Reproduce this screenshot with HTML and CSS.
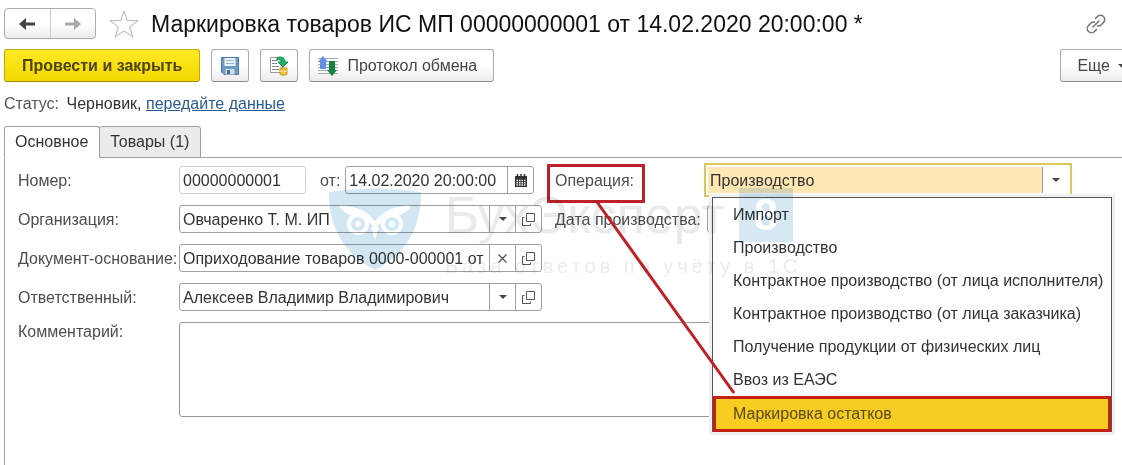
FILE: index.html
```
<!DOCTYPE html>
<html lang="ru">
<head>
	<meta charset="UTF-8">
	<title>Маркировка товаров ИС МП</title>
	<link rel="stylesheet" href="styles.css">
</head>
<body>
	<header class="header">
		<nav class="history">
			<button type="button" aria-label="Назад"><svg width="18" height="14" viewBox="0 0 18 14"><path d="M1 7l7-6v12z" fill="#444"/><path d="M6 7h11" stroke="#444" stroke-width="3"/></svg></button>
			<button type="button" aria-label="Вперед"><svg width="18" height="14" viewBox="0 0 18 14"><path d="M17 7l-7-6v12z" fill="#aaa"/><path d="M12 7H1" stroke="#aaa" stroke-width="3"/></svg></button>
		</nav>
		<button type="button" class="plain" aria-label="В избранное"><svg width="30" height="28" viewBox="0 0 30 28"><path d="M15 1l3.300 9.700H29l-8.500 6.300 3.300 10L15 20.800 6.200 27l3.300-10L1 10.700h10.700z" fill="#fff" stroke="#b4b4b4"/></svg></button>
		<h1>Маркировка товаров ИС МП 00000000001 от 14.02.2020 20:00:00 *</h1>
		<button type="button" class="plain link" aria-label="Получить ссылку"><svg width="20" height="20" viewBox="0 0 20 20" fill="none" stroke="#777" stroke-width="1.600" stroke-linecap="round"><path d="M9.500 4.500l2-2a3.800 3.800 0 0 1 6 6L15 11c-1 1-2.500 1.200-3.500.8M10.500 15.500l-2 2a3.800 3.800 0 0 1-6-6L5 9c1-1 2.500-1.200 3.500-.8M7 13l6-6"/></svg></button>
	</header>

	<div class="toolbar">
		<button type="button" class="btn primary">Провести и закрыть</button>
		<button type="button" class="btn icon" aria-label="Записать"><svg width="18" height="18" viewBox="0 0 18 18"><path d="M.5.5h17v17H3l-2.500-2.500z" fill="#6d9bc8" stroke="#4b76a3"/><path d="M3.500 1h11v8h-11z" fill="#edf3f8"/><path d="M5 3.500h8M5 6.500h8" stroke="#9bb2c7"/><path d="M4.500 12h9v5.500h-9z" fill="#d5dde4"/><path d="M6 13h3v4H6z" fill="#426b96"/></svg></button>
		<button type="button" class="btn icon" aria-label="Провести"><svg width="20" height="20" viewBox="0 0 20 20"><path d="M1.500 1.500h12v15h-12z" fill="#fff" stroke="#999"/><path d="M3 4.500h6M3 7.500h5M3 10.500h7M3 13.500h7" stroke="#888"/><path d="M11 12h7v6c0 1.500-7 1.500-7 0z" fill="#eac23c" stroke="#c09525"/><path d="M11 15c2 1 5 1 7 0" fill="none" stroke="#fff0a8"/><path d="M8 1.500c6-1.500 8 1 8 4.500h3l-5 5-5-5h3c0-2-1-3-4-2z" fill="#20b368" stroke="#109050"/></svg></button>
		<button type="button" class="btn"><svg width="22" height="20" viewBox="0 0 22 20"><path d="M1 2.500h20M1 5.500h20M1 8.500h20M1 11.500h20M1 14.500h20M1 17.500h20" stroke="#a5adb5"/><path d="M6 0l5 6H9v7H3V6H1z" fill="#638fe0"/><path d="M15 20l-5-6h2V5h6v9h2z" fill="#158445"/></svg>Протокол обмена</button>
		<button type="button" class="btn more">Еще <span class="caret"></span></button>
	</div>

	<p class="status"><span>Статус:</span> Черновик, <a href="#send">передайте данные</a></p>

	<div class="tabs" role="tablist">
		<button type="button" role="tab" aria-selected="true" class="active">Основное</button>
		<button type="button" role="tab" aria-selected="false">Товары (1)</button>
	</div>

	<main class="panel">
		<form class="form">
			<label for="number">Номер:</label>
			<div class="pair">
				<input class="number" id="number" value="00000000001" readonly>
				<label for="date">от:</label>
				<div class="field date">
					<input id="date" value="14.02.2020 20:00:00">
					<button type="button" aria-label="Календарь"><svg width="12" height="13" viewBox="0 0 12 13"><path d="M0 2h12v11H0z" fill="#333"/><path d="M2.500 0v3M6 0v3M9.500 0v3" stroke="#333" stroke-width="1.500"/><path d="M1.500 6.500h9M1.500 8.800h9M1.500 11h9" stroke="#fff" stroke-width="1.400" stroke-dasharray="1.500 1"/></svg></button>
				</div>
			</div>
			<label class="second marked" for="operation">Операция:
				<svg class="pointer" width="142" height="196" viewBox="0 0 142 196"><path d="M2 2l137 191" stroke="#c01f26" stroke-width="3"/></svg>
			</label>
			<div class="operation">
				<div class="combo">
					<select id="operation">
						<option>Производство</option>
					</select>
					<span class="drop"><span class="caret"></span></span>
				</div>
				<ul class="menu">
					<li><button type="button">Импорт</button></li>
					<li><button type="button">Производство</button></li>
					<li><button type="button">Контрактное производство (от лица исполнителя)</button></li>
					<li><button type="button">Контрактное производство (от лица заказчика)</button></li>
					<li><button type="button">Получение продукции от физических лиц</button></li>
					<li><button type="button">Ввоз из ЕАЭС</button></li>
					<li><button type="button" class="selected">Маркировка остатков</button></li>
				</ul>
			</div>

			<label for="org">Организация:</label>
			<div class="field">
				<input id="org" value="Овчаренко Т. М. ИП">
				<button type="button" aria-label="Выбрать"><span class="caret"></span></button>
				<button type="button" aria-label="Открыть"><svg width="13" height="13" viewBox="0 0 13 13"><path d="M4.500.5h8v8h-8zM2.500 4.500h-2v8h8v-2" fill="none" stroke="#555"/></svg></button>
			</div>
			<label class="second" for="made">Дата производства:</label>
			<div class="field made"><input id="made"></div>

			<label for="base">Документ-основание:</label>
			<div class="field">
				<input id="base" value="Оприходование товаров 0000-000001 от">
				<button type="button" aria-label="Очистить"><svg width="9" height="9" viewBox="0 0 9 9"><path d="M.5.5l8 8M8.500.5l-8 8" stroke="#555" stroke-width="1.300"/></svg></button>
				<button type="button" aria-label="Открыть"><svg width="13" height="13" viewBox="0 0 13 13"><path d="M4.500.5h8v8h-8zM2.500 4.500h-2v8h8v-2" fill="none" stroke="#555"/></svg></button>
			</div>

			<label class="first" for="person">Ответственный:</label>
			<div class="field">
				<input id="person" value="Алексеев Владимир Владимирович">
				<button type="button" aria-label="Выбрать"><span class="caret"></span></button>
				<button type="button" aria-label="Открыть"><svg width="13" height="13" viewBox="0 0 13 13"><path d="M4.500.5h8v8h-8zM2.500 4.500h-2v8h8v-2" fill="none" stroke="#555"/></svg></button>
			</div>

			<label class="first top" for="comment">Комментарий:</label>
			<textarea id="comment"></textarea>
		</form>
	</main>

	<div class="watermark">
		<svg width="92" height="82" viewBox="0 0 92 82">
			<path d="M0 4Q46-3 92 4C92 42 76 66 46 82 16 66 0 42 0 4z" fill="#d3e6f3"/>
			<path d="M10 17c16 1 27 5 36 16 9-11 20-15 36-16-2 5-6 8-11 10-10 1-18 5-25 14-7-9-15-13-25-14-5-2-9-5-11-10z" fill="#fff"/>
			<g fill="none" stroke="#fff" stroke-width="4"><circle cx="29" cy="36" r="9"/><circle cx="63" cy="36" r="9"/></g>
			<g fill="#fff"><circle cx="29" cy="36" r="3"/><circle cx="63" cy="36" r="3"/><path d="M42 39h8l-4 13z"/></g>
		</svg>
		<div class="brand">
			<div class="name">БухЭксперт <span class="eight">8</span></div>
			<div class="tagline">База ответов по учёту в 1С</div>
		</div>
	</div>
</body>
</html>
```
FILE: styles.css
```
*{
	box-sizing: border-box;
}
body{
	position: relative;
	min-height: 100vh;
	margin: 0;
	padding: 8px 0 0 4px;
	display: flex;
	flex-direction: column;
	overflow: hidden;
	background: #fff;
	color: #333;
	font: 16px/20px "Liberation Sans", Arial, sans-serif;
}
button, input, select, textarea{
	margin: 0;
	padding: 0;
	font: inherit;
	color: inherit;
	border: 0;
	background: none;
	outline: none;
}
button{
	display: flex;
	align-items: center;
	justify-content: center;
}
svg{
	display: block;
	flex: none;
}
a{
	color: #2a5c94;
}

/* title row */
.header{
	display: flex;
	align-items: center;
	height: 31px;
}
.history{
	display: flex;
	width: 92px;
	height: 31px;
	margin-right: 13px;
	border: 1px solid #aaa;
	border-radius: 4px;
	background: linear-gradient(#fff 50%, #ececec);
}
.history button{
	flex: 1;
}
.history button + button{
	border-left: 1px solid #ccc;
}
h1{
	margin: 0 0 0 12px;
	font-size: 23px;
	line-height: 30px;
	font-weight: normal;
	color: #111;
	white-space: nowrap;
}
.link{
	margin: 0 16px 0 auto;
}

.toolbar{
	display: flex;
	gap: 11px;
	margin-top: 10px;
}
.btn{
	gap: 8px;
	height: 33px;
	padding: 0 16px 0 7px;
	border: 1px solid #aaa;
	border-bottom-color: #8f8f8f;
	border-radius: 3px;
	background: linear-gradient(#fff 50%, #ececec);
	color: #444;
	white-space: nowrap;
}
.primary{
	padding: 0 17px;
	border-color: #bfa800 #bfa800 #9c8900;
	background: linear-gradient(#ffe924, #f2d800);
	color: #4d4410;
	font-weight: bold;
}
.icon{
	width: 38px;
	padding: 0;
}
.more{
	margin: 0 -21px 0 auto;
	padding: 0 16px;
}
.caret{
	border: 4px solid transparent;
	border-top-color: #444;
	border-bottom: 0;
}

.status{
	margin: 12px 0;
}
.status span{
	margin-right: 3px;
	color: #555;
}

.tabs{
	position: relative;
	display: flex;
	margin-bottom: -1px;
}
.tabs button{
	height: 32px;
	margin-right: -1px;
	padding: 0 11px 0 10px;
	border: 1px solid #a0a0a0;
	border-radius: 3px 3px 0 0;
	background: #ebebeb;
}
.tabs .active{
	border-bottom-color: #fff;
	background: #fff;
}
.panel{
	flex: 1;
	padding: 8px 50px 12px 13px;
	border: 1px solid #a0a0a0;
	border-width: 1px 0 0 1px;
}

.form{
	display: grid;
	grid-template-columns: 161px 363px 136px minmax(200px, 1fr);
	row-gap: 11px;
	align-items: center;
}
.form label{
	padding-top: 2px;
	color: #4d4d4d;
	white-space: nowrap;
}
.form .second{
	margin-left: 13px;
}
.form .first{
	grid-column: 1;
}
.form .top{
	align-self: start;
	padding-top: 0;
}
.pair{
	display: flex;
	align-items: center;
}
.form .pair label{
	margin: 0 5px 0 14px;
}
.number{
	width: 127px;
	height: 28px;
	padding: 2px 3px 0;
	border: 1px solid #d0d0d0;
	border-radius: 3px;
}
.field{
	display: flex;
	height: 28px;
	border: 1px solid #a0a0a0;
	border-radius: 3px;
	background: #fff;
}
.field input{
	flex: 1;
	min-width: 0;
	padding: 2px 3px 0;
}
.field button{
	width: 26px;
	border-left: 1px solid #a0a0a0;
}
.date{
	width: 189px;
}
.made{
	width: 120px;
	margin-left: 29px;
}
textarea{
	grid-column: 2 / -1;
	height: 95px;
	border: 1px solid #999;
	border-radius: 3px;
	resize: none;
}

/* operation list */
.operation{
	position: relative;
	height: 28px;
	margin: 0 0 0 26px;
}
.combo{
	display: flex;
	height: 34px;
	margin-top: -3px;
	border: 2px solid #d9c95a;
	background: #fff;
	padding: 2px;
}
.combo select{
	flex: 1;
	padding: 2px 2px 0;
	appearance: none;
	background: #ffe7b3;
}
.drop{
	display: flex;
	align-items: center;
	justify-content: center;
	width: 26px;
	border-left: 1px solid #999;
}
.menu{
	position: absolute;
	z-index: 2;
	top: 31px;
	left: 8px;
	width: 400px;
	margin: 0;
	padding: 0;
	list-style: none;
	border: 1px solid #555;
	border-bottom: 0;
	background: #fff;
	box-shadow: 0 0 0 3px #f0f0f0;
}
.menu button{
	justify-content: flex-start;
	width: 100%;
	height: 33px;
	padding-left: 20px;
	white-space: nowrap;
}
.menu .selected{
	height: 36px;
	padding-left: 17px;
	border: 3px solid #c32010;
	background: #f6cd20;
	color: #5c4a10;
}

/* red frame round the label and the line to the list */
.form .marked{
	position: relative;
}
.marked::before{
	content: "";
	position: absolute;
	inset: -5px 33px -12px -8px;
	border: 3px solid #bd2028;
}
.pointer{
	position: absolute;
	z-index: 3;
	left: 40px;
	top: 31px;
}

.watermark{
	position: absolute;
	z-index: 4;
	top: 50%;
	left: 50%;
	display: flex;
	gap: 24px;
	width: 464px;
	transform: translate(-50%, -50%);
	mix-blend-mode: multiply;
	pointer-events: none;
	white-space: nowrap;
}
.name{
	display: flex;
	justify-content: space-between;
	align-items: center;
	width: 348px;
	height: 54px;
	font-size: 52px;
	line-height: 54px;
	color: #e8eaed;
}
.eight{
	width: 54px;
	background: #d6e8f4;
	color: #fff;
	font-size: 44px;
	font-weight: bold;
	text-align: center;
}
.tagline{
	margin-top: 12px;
	font-size: 20px;
	line-height: 24px;
	letter-spacing: 4px;
	color: #ececee;
}
```
